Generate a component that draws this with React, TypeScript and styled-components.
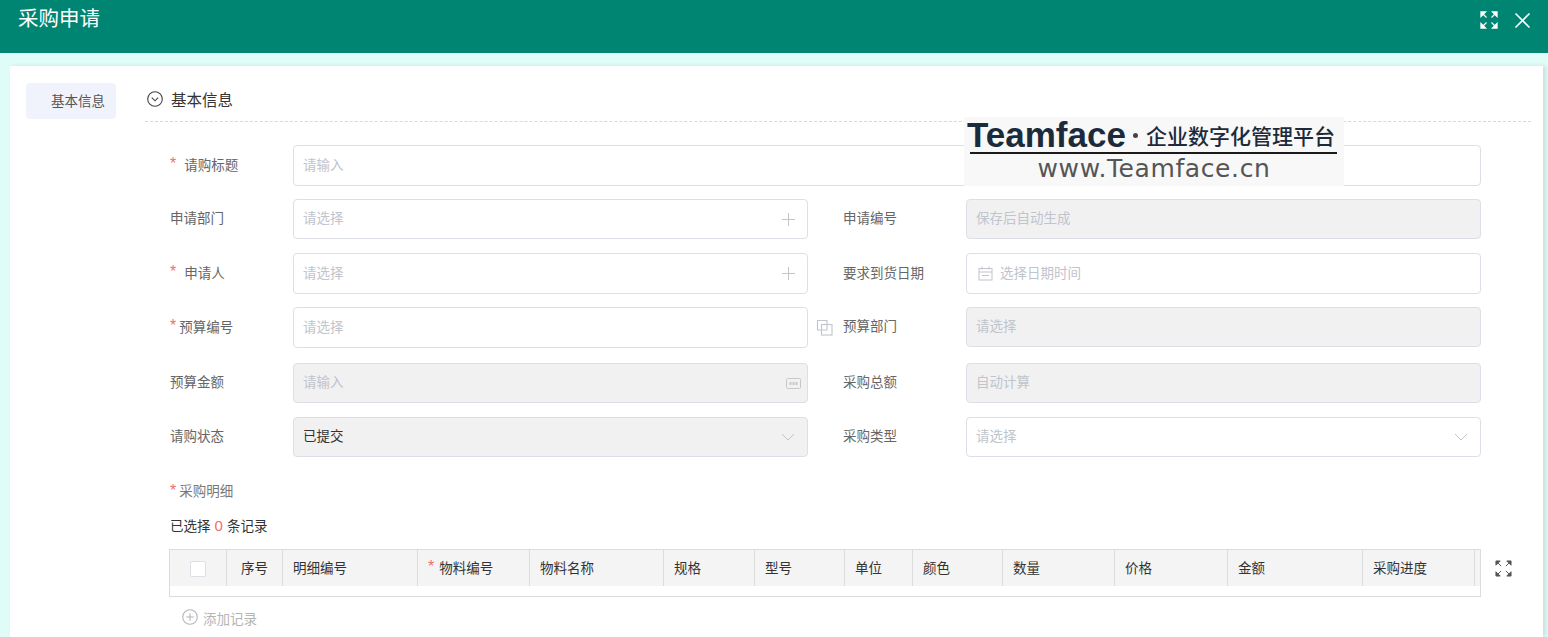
import styled, { createGlobalStyle } from "styled-components";

const GlobalStyle = createGlobalStyle`
    html, body {
        margin: 0;
        padding: 0;
        height: 100%;
        overflow: hidden;
    }
    body {
        font-family: "Noto Sans CJK SC", "Liberation Sans", sans-serif;
    }
    * {
        box-sizing: border-box;
    }
`;

const Page = styled.div`
    height: 637px;
    display: flex;
    flex-direction: column;
    background-color: #e0fcf8;
    overflow: hidden;
`;

const TopBar = styled.header`
    height: 53px;
    flex-shrink: 0;
    background-color: #008573;
    display: flex;
    justify-content: space-between;
    align-items: flex-start;
    padding: 3px 17px 0 18px;
`;

const Title = styled.h1`
    margin: 0;
    font-size: 20.5px;
    line-height: 28px;
    font-weight: 400;
    color: #fff;
`;

const TopActions = styled.div`
    display: flex;
    align-items: center;
    gap: 16px;
    padding-top: 8px;
`;

const Card = styled.main`
    position: relative;
    flex: 1;
    margin: 13px 5px 0 10px;
    background-color: #fff;
    box-shadow: 3px 0 4px rgba(0, 60, 50, 0.12);
    display: flex;
    padding: 17px 12px 0 16px;
`;

const SideNav = styled.nav`
    width: 90px;
    flex-shrink: 0;
    margin-right: 29px;
`;

const NavItem = styled.div`
    height: 36px;
    border-radius: 4px;
    background-color: #f0f3fb;
    color: #555;
    font-size: 13.5px;
    line-height: 34px;
    padding-left: 25px;
`;

const Content = styled.div`
    flex: 1;
    min-width: 0;
`;

const SectionHead = styled.div`
    height: 39px;
    display: flex;
    align-items: center;
    gap: 8px;
    padding: 0 0 7px 2px;
    border-bottom: 1px dashed #d9d9d9;
    color: #333;
    font-size: 15.5px;
`;

const Form = styled.div`
    padding: 23px 0 0 25px;
`;

const Row = styled.div<{ $tall?: boolean }>`
    height: ${(props) => (props.$tall ? "56px" : "54px")};
    display: grid;
    grid-template-columns: 123px 515px 35px 123px 515px;
    align-items: start;
`;

const Label = styled.label<{ $height?: number }>`
    height: ${(props) => props.$height ?? 40}px;
    display: flex;
    align-items: center;
    padding-bottom: 4px;
    font-size: 13.5px;
    color: #666;
`;

const Star = styled.span<{ $gap?: number }>`
    font-family: "Liberation Sans", sans-serif;
    font-size: 16px;
    line-height: 16px;
    color: #f56c6c;
    margin-right: ${(props) => props.$gap ?? 3}px;
`;

const Control = styled.div<{ $height?: number; $off?: boolean; $wide?: boolean }>`
    height: ${(props) => props.$height ?? 40}px;
    ${(props) => props.$wide && "grid-column: span 4;"}
    display: flex;
    align-items: center;
    justify-content: space-between;
    padding: 0 12px 0 9px;
    border: 1px solid #dcdfe6;
    border-radius: 4px;
    background-color: ${(props) => (props.$off ? "#f1f1f2" : "#fff")};
    font-size: 13.5px;
`;

const ControlText = styled.span<{ $dark?: boolean }>`
    margin-bottom: 4px;
    color: ${(props) => (props.$dark ? "#333" : "#c0c4cc")};
`;

const DateField = styled.span`
    display: flex;
    align-items: center;
    gap: 7px;
    padding-left: 2px;
`;

const Gutter = styled.div`
    height: 40px;
    display: flex;
    align-items: center;
    padding: 0 0 0 8px;
`;

const NumberSlot = styled.span`
    display: flex;
    margin-right: -6px;
`;

const DetailLabel = styled.div`
    margin-top: 9px;
    height: 20px;
    line-height: 20px;
    font-size: 13.5px;
    color: #777;
`;

const SelectedLine = styled.div`
    margin-top: 15px;
    height: 20px;
    line-height: 20px;
    font-size: 13.5px;
    color: #333;
`;

const Count = styled.span`
    font-family: "Liberation Sans", sans-serif;
    font-size: 15px;
    margin: 0 1px;
    color: #f56c6c;
`;

const TableWrap = styled.div`
    margin: 14px 0 0 -1px;
    display: flex;
    align-items: flex-start;
    gap: 14px;
`;

const Table = styled.div`
    width: 1312px;
    height: 48px;
    flex-shrink: 0;
    border: 1px solid #dcdcdc;
`;

const HeadRow = styled.div`
    height: 36px;
    display: flex;
    background-color: #f4f4f4;
`;

const HeadCell = styled.div<{ $w: number; $center?: boolean }>`
    width: ${(props) => props.$w}px;
    flex-shrink: 0;
    display: flex;
    align-items: center;
    justify-content: ${(props) => (props.$center ? "center" : "flex-start")};
    padding-left: ${(props) => (props.$center ? "0" : "10px")};
    padding-bottom: 2px;
    border-right: 1px solid #dcdcdc;
    font-size: 13.5px;
    color: #333;
    white-space: nowrap;
`;

const Check = styled.span`
    width: 16px;
    height: 16px;
    margin-top: 3px;
    background-color: #fff;
    border: 1px solid #dcdfe6;
    border-radius: 2px;
`;

const TableTool = styled.div`
    padding-top: 11px;
    line-height: 0;
`;

const AddRecord = styled.div`
    margin: 9px 0 0 12px;
    height: 21px;
    display: flex;
    align-items: center;
    gap: 5px;
    font-size: 13.5px;
    color: #b5b5b5;
`;

const AddText = styled.span`
    margin-top: 2px;
`;

const Logo = styled.div`
    position: absolute;
    left: 954px;
    top: 51px;
    width: 380px;
    height: 69px;
    background-color: #f8f8f8;
    font-family: "Liberation Sans", sans-serif;
`;

const LogoTop = styled.div`
    height: 35px;
    display: flex;
    align-items: center;
    padding-left: 3px;
`;

const LogoName = styled.span`
    font-size: 35px;
    font-weight: 700;
    color: #1c2b3c;
    line-height: 35px;
`;

const LogoDot = styled.span`
    width: 5px;
    height: 5px;
    border-radius: 50%;
    background-color: #444;
    margin: 2px 8px 0 7px;
`;

const LogoSlogan = styled.span`
    font-family: "Noto Sans CJK SC", sans-serif;
    font-size: 21px;
    font-weight: 500;
    color: #1c2b3c;
`;

const LogoRule = styled.div`
    height: 2px;
    margin: 0 7px 0 6px;
    background-color: #1a1a1a;
`;

const LogoUrl = styled.div`
    font-family: "DejaVu Sans", sans-serif;
    font-size: 25px;
    line-height: 30px;
    text-align: center;
    letter-spacing: 0.6px;
    color: #555;
`;

const ExpandIcon = ({ size, color, width }: { size: number; color: string; width: number }) => (
    <svg width={size} height={size} viewBox="0 0 18 18" fill={color} stroke={color} strokeWidth={width}>
        <path d="M1 1h4.5L1 5.5z" />
        <path d="M2 2l4.5 4.5" />
        <path d="M17 1h-4.5L17 5.5z" />
        <path d="M16 2l-4.5 4.5" />
        <path d="M1 17h4.5L1 12.5z" />
        <path d="M2 16l4.5-4.5" />
        <path d="M17 17h-4.5l4.5-4.5z" />
        <path d="M16 16l-4.5-4.5" />
    </svg>
);

const CloseIcon = () => (
    <svg width="17" height="17" viewBox="0 0 17 17" fill="none" stroke="#fff" strokeWidth="1.6">
        <path d="M1.5 1.5l14 14M15.5 1.5l-14 14" />
    </svg>
);

const CollapseIcon = () => (
    <svg width="16" height="16" viewBox="0 0 16 16" fill="none" stroke="#444" strokeWidth="1.1">
        <circle cx="8" cy="8" r="7.3" />
        <path d="M4.8 6.6L8 9.8l3.2-3.2" />
    </svg>
);

const PlusIcon = () => (
    <svg width="13" height="13" viewBox="0 0 13 13" stroke="#c0c4cc" strokeWidth="1">
        <path d="M6.5 0v13M0 6.5h13" />
    </svg>
);

const ChevronIcon = () => (
    <svg width="14" height="8" viewBox="0 0 14 8" fill="none" stroke="#c0c4cc" strokeWidth="1">
        <path d="M1 1l6 6 6-6" />
    </svg>
);

const CalendarIcon = () => (
    <svg width="15" height="15" viewBox="0 0 15 15" fill="none" stroke="#c0c4cc" strokeWidth="1">
        <rect x="1" y="2.5" width="13" height="11.5" />
        <path d="M4 .5v3M11 .5v3M1 6h13M4 9.5h7" />
    </svg>
);

const LinkIcon = () => (
    <svg width="17" height="17" viewBox="0 0 17 17" fill="none" stroke="#c0c4cc" strokeWidth="1.1">
        <path d="M11 5V1.5H1.5V11H5" />
        <rect x="5.5" y="5.5" width="10.5" height="10.5" />
        <path d="M5.5 11H11V5.5" />
    </svg>
);

const NumberIcon = () => (
    <svg width="15" height="11" viewBox="0 0 15 11" fill="none" stroke="#c8c8cc" strokeWidth="1">
        <rect x=".5" y=".5" width="14" height="10" rx="1" />
        <path d="M3.5 5.5h8" strokeWidth="3" strokeDasharray="2 1" />
    </svg>
);

const AddIcon = () => (
    <svg width="16" height="16" viewBox="0 0 16 16" fill="none" stroke="#b5b5b5" strokeWidth="1.1">
        <circle cx="8" cy="8" r="7.3" />
        <path d="M8 4.2v7.6M4.2 8h7.6" />
    </svg>
);

const columns = [
    { name: "明细编号", w: 135 },
    { name: "物料编号", w: 112, required: true },
    { name: "物料名称", w: 134 },
    { name: "规格", w: 91 },
    { name: "型号", w: 90 },
    { name: "单位", w: 68 },
    { name: "颜色", w: 90 },
    { name: "数量", w: 112 },
    { name: "价格", w: 113 },
    { name: "金额", w: 135 },
    { name: "采购进度", w: 112 },
];

function App() {
    return (
        <Page>
            <GlobalStyle />
            <TopBar>
                <Title>采购申请</Title>
                <TopActions>
                    <ExpandIcon size={18} color="#fff" width={1.3} />
                    <CloseIcon />
                </TopActions>
            </TopBar>
            <Card>
                <SideNav>
                    <NavItem>基本信息</NavItem>
                </SideNav>
                <Content>
                    <SectionHead>
                        <CollapseIcon />
                        基本信息
                    </SectionHead>
                    <Form>
                        <Row>
                            <Label $height={41}>
                                <Star $gap={8}>*</Star>请购标题
                            </Label>
                            <Control $wide $height={41}>
                                <ControlText>请输入</ControlText>
                            </Control>
                        </Row>
                        <Row>
                            <Label>申请部门</Label>
                            <Control>
                                <ControlText>请选择</ControlText>
                                <PlusIcon />
                            </Control>
                            <Gutter />
                            <Label>申请编号</Label>
                            <Control $off>
                                <ControlText>保存后自动生成</ControlText>
                            </Control>
                        </Row>
                        <Row>
                            <Label $height={41}>
                                <Star $gap={8}>*</Star>申请人
                            </Label>
                            <Control $height={41}>
                                <ControlText>请选择</ControlText>
                                <PlusIcon />
                            </Control>
                            <Gutter />
                            <Label $height={41}>要求到货日期</Label>
                            <Control $height={41}>
                                <DateField>
                                    <CalendarIcon />
                                    <ControlText>选择日期时间</ControlText>
                                </DateField>
                            </Control>
                        </Row>
                        <Row $tall>
                            <Label $height={41}>
                                <Star>*</Star>预算编号
                            </Label>
                            <Control $height={41}>
                                <ControlText>请选择</ControlText>
                            </Control>
                            <Gutter>
                                <LinkIcon />
                            </Gutter>
                            <Label>预算部门</Label>
                            <Control $off>
                                <ControlText>请选择</ControlText>
                            </Control>
                        </Row>
                        <Row>
                            <Label>预算金额</Label>
                            <Control $off>
                                <ControlText>请输入</ControlText>
                                <NumberSlot>
                                    <NumberIcon />
                                </NumberSlot>
                            </Control>
                            <Gutter />
                            <Label>采购总额</Label>
                            <Control $off>
                                <ControlText>自动计算</ControlText>
                            </Control>
                        </Row>
                        <Row>
                            <Label>请购状态</Label>
                            <Control $off>
                                <ControlText $dark>已提交</ControlText>
                                <ChevronIcon />
                            </Control>
                            <Gutter />
                            <Label>采购类型</Label>
                            <Control>
                                <ControlText>请选择</ControlText>
                                <ChevronIcon />
                            </Control>
                        </Row>
                        <DetailLabel>
                            <Star>*</Star>采购明细
                        </DetailLabel>
                        <SelectedLine>
                            已选择 <Count>0</Count> 条记录
                        </SelectedLine>
                        <TableWrap>
                            <Table>
                                <HeadRow>
                                    <HeadCell $w={57} $center>
                                        <Check />
                                    </HeadCell>
                                    <HeadCell $w={56} $center>
                                        序号
                                    </HeadCell>
                                    {columns.map((col) => (
                                        <HeadCell key={col.name} $w={col.w}>
                                            {col.required && <Star $gap={5}>*</Star>}
                                            {col.name}
                                        </HeadCell>
                                    ))}
                                </HeadRow>
                            </Table>
                            <TableTool>
                                <ExpandIcon size={17} color="#555" width={1} />
                            </TableTool>
                        </TableWrap>
                        <AddRecord>
                            <AddIcon />
                            <AddText>添加记录</AddText>
                        </AddRecord>
                    </Form>
                </Content>
                <Logo>
                    <LogoTop>
                        <LogoName>Teamface</LogoName>
                        <LogoDot />
                        <LogoSlogan>企业数字化管理平台</LogoSlogan>
                    </LogoTop>
                    <LogoRule />
                    <LogoUrl>www.Teamface.cn</LogoUrl>
                </Logo>
            </Card>
        </Page>
    );
}

export default App;
